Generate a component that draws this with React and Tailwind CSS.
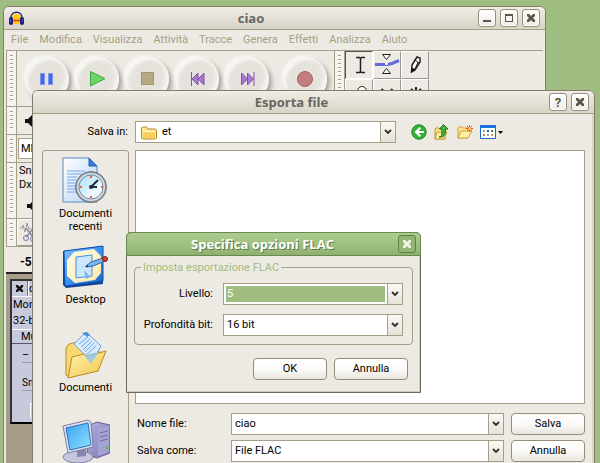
import { useId } from 'react'

const MENU = ['File', 'Modifica', 'Visualizza', 'Attività', 'Tracce', 'Genera', 'Effetti', 'Analizza', 'Aiuto']

function CloseGlyph({ color = '#5c564b', className = 'size-2.5' }) {
  return (
    <svg viewBox="0 0 10 10" className={className} aria-hidden="true">
      <path d="M1 1h2l2 2 2-2h2v2L7 5l2 2v2H7L5 7 3 9H1V7l2-2-2-2z" fill={color} />
    </svg>
  )
}

function CaptionButton({ label, children }) {
  return (
    <button
      type="button"
      aria-label={label}
      className="flex size-[18px] shrink-0 items-center justify-center rounded-[3px] border border-[#968d79] bg-linear-to-b from-white to-[#eeebe3] text-[13px] leading-none font-bold text-[#5c564b] shadow-[inset_0_0_0_1px_#fff]"
    >
      {children}
    </button>
  )
}

function TitleBar({ icon, title, children }) {
  return (
    <header className="flex h-[23px] items-center gap-1 border-b border-[#a79e89] bg-linear-to-b from-[#f0ede6] via-[#e5e1d8] to-[#d8d3c5] pr-[5px] pl-[5px]">
      {icon}
      <h1 className="flex-1 text-center font-['Open_Sans','Noto_Sans',sans-serif] text-[13px] leading-4 font-bold text-[#686661]">{title}</h1>
      {children}
    </header>
  )
}

function Chevron() {
  return (
    <svg width="8" height="6" viewBox="0 0 8 6" aria-hidden="true">
      <path d="M1 1l3 3 3-3" fill="none" stroke="#333029" strokeWidth="1.800" />
    </svg>
  )
}

const DROP = 'flex w-[15px] shrink-0 items-center justify-center border-l border-[#a79e89] bg-linear-to-b from-[#faf9f6] to-[#e6e2d8]'

function Drop({ id, value, selected, icon, className = '' }) {
  return (
    <div className={`relative flex h-[22px] border border-[#a79e89] bg-white ${className}`}>
      {icon}
      <select
        id={id}
        defaultValue={value}
        className={`min-w-0 flex-1 appearance-none outline-none ${selected ? 'm-0.5 bg-[#9fbd80] pl-px text-white' : 'pl-[3px] text-black'}`}
      >
        <option>{value}</option>
      </select>
      <span className={`${DROP} pointer-events-none`}>
        <Chevron />
      </span>
    </div>
  )
}

function PushButton({ children }) {
  return (
    <button
      type="button"
      className="h-[22px] w-[74px] rounded-[4px] border border-[#968d79] bg-linear-to-b from-white via-[#fbfaf8] to-[#e9e6de] text-center leading-4 text-black"
    >
      {children}
    </button>
  )
}

function Grip() {
  return (
    <div className="w-[11px] shrink-0 border-r border-l border-[#a79e89] bg-[#f5f3ee] px-[3px] py-1">
      <div className="h-full bg-[repeating-linear-gradient(to_bottom,#a79e89_0_1px,#ffffff_1px_2px,#f5f3ee_2px_4px)]" />
    </div>
  )
}

function Headphones() {
  return (
    <svg width="15" height="15" viewBox="0 0 15 15" className="shrink-0" aria-hidden="true">
      <path d="M3 6l2-3h5l2 3v7H3z" fill="#ffc91c" />
      <path d="M3 8l2 1 1-1 1.500 2L9 8l1 1 2-1v3l-2-1-1 1-1.500-1L6 11l-1-1-2 1z" fill="#f26b1d" />
      <path d="M5 9h5v1H5z" fill="#e02a1a" />
      <path d="M2 8C1.500 3.500 4 1.200 7.500 1.200S13.500 3.500 13 8" fill="none" stroke="#23287e" strokeWidth="1.400" />
      <rect x="0" y="6" width="4" height="8" rx="2" fill="#171b86" />
      <rect x="11" y="6" width="4" height="8" rx="2" fill="#171b86" />
      <path d="M1.500 8v3M13.500 8v3" stroke="#5560c0" />
    </svg>
  )
}

const TRANSPORT = [
  { label: 'Pausa', art: <path d="M13.500 17.500h4v11h-4zM21.500 17.500h4v11h-4z" fill="#4169e8" stroke="#7c95ea" /> },
  { label: 'Riproduci', art: <path d="M13.500 15.500v14.500L28 22.700z" fill="#6bd667" stroke="#43a743" /> },
  { label: 'Ferma', art: <rect x="14.500" y="16.500" width="12" height="12" fill="#b5a882" stroke="#a3966f" /> },
  { label: 'Inizio', art: <path d="M14.500 16v14M21 17v12l-6-6zM27 17v12l-6-6z" fill="#a878d2" stroke="#8055ab" /> },
  { label: 'Fine', art: <path d="M27 16v14M14.500 17v12l6-6zM20.500 17v12l6-6z" fill="#a878d2" stroke="#8055ab" /> },
  { label: 'Registra', art: <circle cx="20" cy="23" r="7.500" fill="#c27d7f" stroke="#a85f63" /> },
]

function Transport() {
  return (
    <div className="flex items-center pl-2">
      {TRANSPORT.map(({ label, art }) => (
        <button
          key={label}
          type="button"
          aria-label={label}
          className="mr-1.5 flex size-11 shrink-0 items-center justify-center rounded-full bg-[#e6e3dd] shadow-[3px_3px_4px_#a9a69f,-1px_-1px_3px_#ffffff,inset_3px_3px_3px_#f8f7f4,inset_-3px_-3px_4px_#f8f7f4] last:mr-[7px] last:ml-2"
        >
          <svg viewBox="0 0 40 46" className="h-[46px] w-10 shrink-0" aria-hidden="true">{art}</svg>
        </button>
      ))}
    </div>
  )
}

const TOOLS = [
  { label: 'Selezione', on: true, art: <path d="M10 5.500h3.500l1 1 1-1H19M14.500 6v14M10 20.500h3.500l1-1 1 1H19" fill="none" stroke="#222" strokeWidth="1.500" /> },
  {
    label: 'Inviluppo',
    art: (
      <>
        <path d="M8.500 2.500h8l-4 5zM8.500 21.500h8l-4-5z" fill="#fff" stroke="#222" />
        <path d="M1 12.500h12l5-1 7-3" fill="none" stroke="#6468dd" strokeWidth="3" />
        <circle cx="12.500" cy="11.500" r="1.500" fill="#fff" />
      </>
    ),
  },
  {
    label: 'Disegno',
    art: (
      <>
        <path d="M9.500 20l.5-7 5-8 3 1v4l-5 8z" fill="#fff" stroke="#222" strokeWidth="1.500" />
        <path d="M9 21l1-5 4 1z" fill="#111" />
        <path d="M13 8l4 3M13 17l3-7" stroke="#222" />
      </>
    ),
  },
  { label: 'Zoom', art: <><circle cx="16" cy="11" r="4.500" fill="#fff" stroke="#222" /><path d="M12 15l-4 5" stroke="#222" strokeWidth="2" /></> },
  { label: 'Spostamento', art: <path d="M5 13h16M9 9l-4 4 4 4M17 9l4 4-4 4" fill="none" stroke="#222" strokeWidth="2" /> },
  { label: 'Multi', art: <path d="M14 7v14M7 14h14M9 9l10 10M19 9L9 19" stroke="#222" strokeWidth="2" /> },
]

function Tools() {
  return (
    <div className="grid grid-cols-3">
      {TOOLS.map(({ label, on, art }) => (
        <button
          key={label}
          type="button"
          aria-label={label}
          className={`size-7 border ${on ? 'border-t-[#555] border-r-white border-b-white border-l-[#555]' : 'border-t-white border-r-[#999] border-b-[#999] border-l-white'}`}
        >
          <svg viewBox="0 0 26 26" className="size-[26px]" aria-hidden="true">{art}</svg>
        </button>
      ))}
    </div>
  )
}

function Speaker() {
  return (
    <svg width="12" height="12" viewBox="0 0 12 12" className="shrink-0" aria-hidden="true">
      <path d="M1 4h3l4-4v12L4 8H1z" fill="#111" />
    </svg>
  )
}

function TrackPanel() {
  return (
    <div className="ml-1 w-40 border-2 border-t-[#333] border-r-black border-b-black border-l-[#333] bg-[#c9c9dc]">
      <div className="flex h-4 border-b border-white leading-4">
        <button type="button" aria-label="Chiudi traccia" className="flex w-4 items-center justify-center border-r border-[#77778a]">
          <CloseGlyph color="#111" className="size-[9px]" />
        </button>
        <span className="flex-1 border-l border-white">c</span>
      </div>
      <p className="h-4 pl-px leading-4">Mono</p>
      <p className="h-4 pl-px leading-4">32-bit</p>
      <button type="button" className="flex h-[15px] w-full items-center border-y border-t-white border-b-[#55556a] pl-[9px]">Mute</button>
      <div className="flex h-[78px] flex-col gap-3 px-2.5 py-1">
        <div className="h-4 border-b border-[#9c9cae] leading-[14px]">–</div>
        <div className="h-4 border-b border-[#9c9cae] text-[10px] leading-4">Sn</div>
        <div className="ml-2 h-4 border-t border-l border-white" />
      </div>
    </div>
  )
}

function MainWindow() {
  return (
    <section className="absolute top-1.5 right-[54px] left-[3px] min-h-screen rounded-t-[6px] border border-[#857d6b] bg-[#edeae3]">
      <div className="overflow-hidden rounded-t-[5px]">
        <TitleBar title="ciao" icon={<Headphones />}>
          <CaptionButton label="Riduci a icona"><span className="mt-1.5 h-0.5 w-2 bg-[#5c564b]" /></CaptionButton>
          <CaptionButton label="Ingrandisci"><span className="size-2 border border-t-2 border-[#5c564b]" /></CaptionButton>
          <CaptionButton label="Chiudi"><CloseGlyph /></CaptionButton>
        </TitleBar>
      </div>
      <nav className="mx-0.5 flex h-[21px] items-center gap-[11px] border-b border-[#a79e89] pl-[5px] text-[#a79e86]">
        {MENU.map(m => <button key={m} type="button">{m}</button>)}
      </nav>
      <div className="mx-0.5">
        <div className="flex h-14 overflow-hidden border-b border-[#a79e89]">
          <Grip />
          <Transport />
          <Grip />
          <Tools />
        </div>
        <div className="flex h-7 items-center border-b border-[#a79e89]">
          <div className="flex self-stretch"><Grip /></div>
          <span className="ml-[7px]"><Speaker /></span>
        </div>
        <div className="flex h-7 border-b border-[#a79e89]">
          <Grip />
          <select aria-label="Periferica" className="my-[3px] ml-px w-32 appearance-none border border-[#a79e89] bg-white pl-0.5">
            <option>MME</option>
          </select>
        </div>
        <div className="flex h-14 border-b border-[#a79e89]">
          <Grip />
          <div className="flex flex-col pt-px pl-0.5 leading-[14px]">
            <span>Snx</span>
            <span>Dx</span>
            <span className="mt-2 ml-[7px]"><Speaker /></span>
          </div>
        </div>
        <div className="flex h-7 border-b border-[#a79e89]">
          <Grip />
          <button type="button" aria-label="Taglia" className="w-7 border border-t-white border-r-[#999] border-b-[#999] border-l-white">
            <svg viewBox="0 0 26 26" className="size-[26px]" aria-hidden="true">
              <path d="M2 8h2l1-3 2 7 2-9 2 6h4" fill="none" stroke="#999" />
              <path d="M8 8l7 9M16 8l-8 9" stroke="#8a8aa0" strokeWidth="1.500" />
              <circle cx="8" cy="18" r="2.500" fill="none" stroke="#7777aa" />
              <circle cx="15" cy="19" r="2.500" fill="none" stroke="#7777aa" />
            </svg>
          </button>
        </div>
        <div className="flex h-[27px] items-center border-b-2 border-[#222] pt-1 pl-3.5 text-[12px] font-bold">-5</div>
      </div>
      <div className="mx-0.5 h-56 bg-[#a79e89] pt-[5px]">
        <TrackPanel />
      </div>
    </section>
  )
}

function RecentIcon() {
  return (
    <svg width="48" height="48" viewBox="0 0 48 48" aria-hidden="true">
      <defs>
        <linearGradient id="paper" x2="1" y2="1"><stop stopColor="#fff" /><stop offset="1" stopColor="#b5d4f5" /></linearGradient>
        <linearGradient id="dial" x2="1" y2="1"><stop stopColor="#a8def8" /><stop offset=".7" stopColor="#eefaff" /></linearGradient>
      </defs>
      <path d="M1 1h26l8 8v36H1z" fill="url(#paper)" stroke="#5a86c8" />
      <path d="M27 1l8 8h-8z" fill="#3b7de0" stroke="#2558b0" />
      <path d="M5 14h18M5 17h15M5 20h10M5 23h9M5 26h8M5 29h8M5 32h9M5 35h10" stroke="#74a9ea" />
      <circle cx="29" cy="30" r="15.500" fill="#9aa0aa" stroke="#6b7079" />
      <circle cx="29" cy="30" r="14" fill="#d5d9df" />
      <circle cx="29" cy="30" r="12" fill="url(#dial)" stroke="#6f8ba5" />
      <path d="M29 30l7-7M29 30h6" stroke="#1e2c3c" strokeWidth="2" />
      <circle cx="29" cy="30" r="2" fill="#1e2c3c" />
      <path d="M28 19h2v2h-2zM28 39h2v2h-2zM18 29h2v2h-2zM39 29h2v2h-2z" fill="#f0622a" />
    </svg>
  )
}

function DesktopIcon() {
  return (
    <svg width="48" height="44" viewBox="0 0 48 44" aria-hidden="true">
      <defs>
        <linearGradient id="pad" x2="1" y2="1"><stop stopColor="#7fc2ff" /><stop offset=".5" stopColor="#3c93ee" /><stop offset="1" stopColor="#1762c8" /></linearGradient>
        <linearGradient id="cream" x2="1" y2="1"><stop stopColor="#fffbe8" /><stop offset="1" stopColor="#ffe9a8" /></linearGradient>
      </defs>
      <path d="M1 6L41 1v38L4 43 1 40z" fill="#0f4396" />
      <path d="M2 6L41 1v35L3 41z" fill="url(#pad)" stroke="#1450ab" />
      <path d="M12 7l20-3 7 7v17l-6 7-20 3-8-7V15z" fill="url(#cream)" />
      <path d="M14 12l16-2v21l-16 2z" fill="#cbe6fd" stroke="#4590dc" />
      <path d="M24 34l-2-9 6 7z" fill="#6fb4f0" />
      <path d="M24 21l5-4 12-4 2 3-12 5-7 1z" fill="#7db6ec" stroke="#2d68ad" />
      <path d="M23 22l3-2v2z" fill="#2b3138" />
      <circle cx="43" cy="14" r="2.500" fill="#d43a28" stroke="#8f1d12" />
    </svg>
  )
}

function DocumentsIcon() {
  return (
    <svg width="44" height="48" viewBox="0 0 44 48" aria-hidden="true">
      <defs>
        <linearGradient id="folder" x2="1" y2="1"><stop stopColor="#fff3b0" /><stop offset="1" stopColor="#f2c447" /></linearGradient>
      </defs>
      <path d="M2 17l3-4 8-2 3 3 22 8-6 18-27 6-3-2z" fill="#f8d873" stroke="#b98a22" />
      <path d="M10 13L22 1l15 14-9 16z" fill="#d8ecfd" stroke="#6fa4d8" />
      <path d="M18 2l5-1 3 3-3 2z" fill="#4b91dc" />
      <path d="M15 13l9-7M17 16l9-8M19 19l9-9M21 21l9-9M23 23l9-8" stroke="#6ba6e4" />
      <path d="M4 47l4-21 12-3 3 2 19-5-8 20z" fill="url(#folder)" stroke="#b98a22" />
      <path d="M20 24l15-3-8 12z" fill="#8fc4ef" opacity=".8" />
    </svg>
  )
}

function ComputerIcon() {
  return (
    <svg width="48" height="46" viewBox="0 0 48 46" aria-hidden="true">
      <defs>
        <linearGradient id="screen" x2="1" y2="1"><stop stopColor="#3aa0f5" /><stop offset="1" stopColor="#8fe4ff" /></linearGradient>
        <linearGradient id="tower" x2="1" y2="1"><stop stopColor="#b3b2de" /><stop offset="1" stopColor="#7876b4" /></linearGradient>
      </defs>
      <path d="M28 6l7-3 13 3v28l-13 5-10-3z" fill="url(#tower)" stroke="#66659c" />
      <path d="M36 9l11-2v26l-11 4z" fill="#a3a2d2" />
      <path d="M38 14l8-2M38 18l8-2M38 22l8-2" stroke="#6d6ba6" />
      <circle cx="45" cy="29" r="1.500" fill="#53c442" />
      <ellipse cx="16" cy="38" rx="15" ry="6" fill="#c6c6dd" stroke="#7f7fa6" />
      <path d="M15 29l9-2v10l-9 1z" fill="#8685b0" />
      <path d="M1 7l25-6 3 2 2 25-25 6z" fill="#dedeea" stroke="#7f7fa6" />
      <path d="M4 9l22-5 3 22-21 5z" fill="url(#screen)" stroke="#2b70c0" />
    </svg>
  )
}

function PlacesBar() {
  const item = 'flex w-full flex-col items-center text-center leading-[13px]'
  return (
    <aside className="flex w-[87px] shrink-0 flex-col items-center gap-[19px] rounded-t-[3px] border border-[#a79e89] pt-1.5">
      <button type="button" className={`${item} gap-0.5`}>
        <RecentIcon />
        <span className="w-16">Documenti recenti</span>
      </button>
      <button type="button" className={`${item} -mt-[7px] gap-1`}><DesktopIcon />Desktop</button>
      <button type="button" className={`${item} mt-1.5 gap-0.5`}><DocumentsIcon />Documenti</button>
      <button type="button" aria-label="Risorse del computer" className={`${item} mt-1.5`}><ComputerIcon /></button>
    </aside>
  )
}

function FolderGlyph() {
  return (
    <svg width="16" height="14" viewBox="0 0 16 14" className="my-1 mr-0.5 ml-[5px] shrink-0" aria-hidden="true">
      <path d="M.5 12V2l1-1h4l1.500 2H14l1.500 1v8l-1 1h-13z" fill="#ffe78a" stroke="#b8892b" />
      <path d="M2 6h12v6H2z" fill="#fbd05a" />
      <path d="M2 5.500h12" stroke="#fffbe0" />
    </svg>
  )
}

function BrowseIcons() {
  return (
    <div className="flex items-center gap-[7px]">
      <button type="button" aria-label="Indietro">
        <svg width="16" height="16" viewBox="0 0 16 16" aria-hidden="true">
          <circle cx="8" cy="8" r="7.200" fill="#36b336" stroke="#207f22" />
          <path d="M13 7v2H7.500L10 11.500 8.500 13l-5-5 5-5L10 4.500 7.500 7z" fill="#fff" />
        </svg>
      </button>
      <button type="button" aria-label="Livello superiore">
        <svg width="16" height="16" viewBox="0 0 16 16" aria-hidden="true">
          <path d="M1 15V5l1-1h3l1 1h5v10z" fill="#ffe588" stroke="#bf9434" />
          <path d="M1 15l2-7h10l-3 7z" fill="#ffef9f" stroke="#c99c36" />
          <path d="M5 13c3 0 3-2 3-8H5.500L9.500.5l4.500 4.500h-2.500c0 6-1 8.500-6.500 8z" fill="#3fba37" stroke="#187519" />
        </svg>
      </button>
      <button type="button" aria-label="Nuova cartella">
        <svg width="16" height="16" viewBox="0 0 16 16" aria-hidden="true">
          <path d="M1 14V4l1-1h3l1 1h5v10z" fill="#ffe588" stroke="#cfa243" />
          <path d="M1 14l3-7h11l-4 7z" fill="#fff0a5" stroke="#cfa243" />
          <path d="M12.500 1v7M9 4.500h7M10 2l5 5M15 2l-5 5" stroke="#f04b22" />
          <circle cx="12.500" cy="4.500" r="1.500" fill="#ffc05a" />
        </svg>
      </button>
      <button type="button" aria-label="Visualizza" className="flex items-center gap-0.5">
        <svg width="16" height="14" viewBox="0 0 16 14" aria-hidden="true">
          <path d="M.5.5h15v13H.5z" fill="#fff" stroke="#1f66cc" />
          <path d="M0 0h16v3H0z" fill="#1f70e0" />
          <path d="M3 5h2v2H3zM7 9h2v2H7z" fill="#7f9ad0" />
          <path d="M7 5h2v2H7z" fill="#2b50b8" />
          <path d="M11 5h2v2h-2z" fill="#249434" />
          <path d="M3 9h2v2H3z" fill="#e46b4c" />
          <path d="M11 9h2v2h-2z" fill="#caa52c" />
        </svg>
        <svg width="5" height="3" viewBox="0 0 5 3" aria-hidden="true"><path d="M0 0h5L2.500 3z" fill="#000" /></svg>
      </button>
    </div>
  )
}

function ExportDialog() {
  const where = useId()
  const name = useId()
  const type = useId()
  return (
    <section className="absolute top-[90px] right-[5px] left-8 rounded-t-[6px] border border-[#857d6b] bg-[#edeae3] pb-4 shadow-[inset_-2px_0_0_#d8d3c5]">
      <div className="overflow-hidden rounded-t-[5px]">
        <TitleBar title="Esporta file">
          <CaptionButton label="Guida">?</CaptionButton>
          <CaptionButton label="Chiudi"><CloseGlyph /></CaptionButton>
        </TitleBar>
      </div>
      <div className="flex items-center pt-[7px] pb-[7px] pl-[9px]">
        <label htmlFor={where} className="w-[86px] text-right">Salva in:</label>
        <Drop id={where} value="et" icon={<FolderGlyph />} className="mr-[15px] ml-[7px] w-[261px]" />
        <BrowseIcons />
      </div>
      <div className="flex gap-1.5 pr-[9px] pl-[9px]">
        <PlacesBar />
        <div className="min-w-0 flex-1">
          <div className="h-[254px] border border-[#a79e89] bg-white" />
          <div className="mt-[9px] grid grid-cols-[90px_1fr_74px] items-center gap-x-1.5 gap-y-[5px] pl-0.5">
            <label htmlFor={name}>Nome file:</label>
            <div className="mr-px -ml-0.5 flex h-[22px] border border-[#a79e89] bg-white">
              <input id={name} defaultValue="ciao" className="min-w-0 flex-1 bg-transparent pl-[3px] outline-none" />
              <button type="button" aria-label="Nomi recenti" className={DROP}><Chevron /></button>
            </div>
            <PushButton>Salva</PushButton>
            <label htmlFor={type}>Salva come:</label>
            <Drop id={type} value="File FLAC" className="mr-px -ml-0.5" />
            <PushButton>Annulla</PushButton>
          </div>
        </div>
      </div>
    </section>
  )
}

function FlacDialog() {
  const level = useId()
  const depth = useId()
  return (
    <section className="absolute top-[232px] left-[126px] w-[295px] rounded-t-[5px] border border-[#6f6859] bg-[#edeae3] shadow-[inset_-1px_-1px_0_#cfcabd]">
      <header className="-m-px flex h-6 items-center rounded-t-[5px] border border-[#688a4d] bg-linear-to-b from-[#adcb90] via-[#a0c081] to-[#8fb070] pr-1">
        <h2 className="flex-1 text-center font-['Open_Sans','Noto_Sans',sans-serif] text-[13px] leading-4 font-bold text-white [text-shadow:1px_1px_0_#5f7b48]">Specifica opzioni FLAC</h2>
        <button type="button" aria-label="Chiudi" className="flex size-[18px] items-center justify-center rounded-[3px] border border-[#5f8044] bg-[#94b575]">
          <CloseGlyph color="#eef4e6" />
        </button>
      </header>
      <div className="px-[7px] pt-[5px] pb-3">
        <fieldset className="rounded-[4px] border border-[#a79e89] pr-[9px] pb-2 pl-2">
          <legend className="-ml-0.5 px-0.5 leading-[15px] text-[#9fbd80]">Imposta esportazione FLAC</legend>
          <div className="grid grid-cols-[70px_1fr] items-center gap-x-2.5 gap-y-[9px] pt-2">
            <label htmlFor={level} className="text-right whitespace-nowrap">Livello:</label>
            <Drop id={level} value="5" selected />
            <label htmlFor={depth} className="text-right whitespace-nowrap">Profondità bit:</label>
            <Drop id={depth} value="16 bit" />
          </div>
        </fieldset>
        <div className="mt-[13px] flex justify-end gap-[7px] pr-[5px]">
          <PushButton>OK</PushButton>
          <PushButton>Annulla</PushButton>
        </div>
      </div>
    </section>
  )
}

export default function App() {
  return (
    <main className="relative h-screen overflow-hidden bg-[#9fbd80] font-[Roboto,'Noto_Sans',sans-serif] text-[11px] leading-4 text-black">
      <MainWindow />
      <ExportDialog />
      <FlacDialog />
    </main>
  )
}
